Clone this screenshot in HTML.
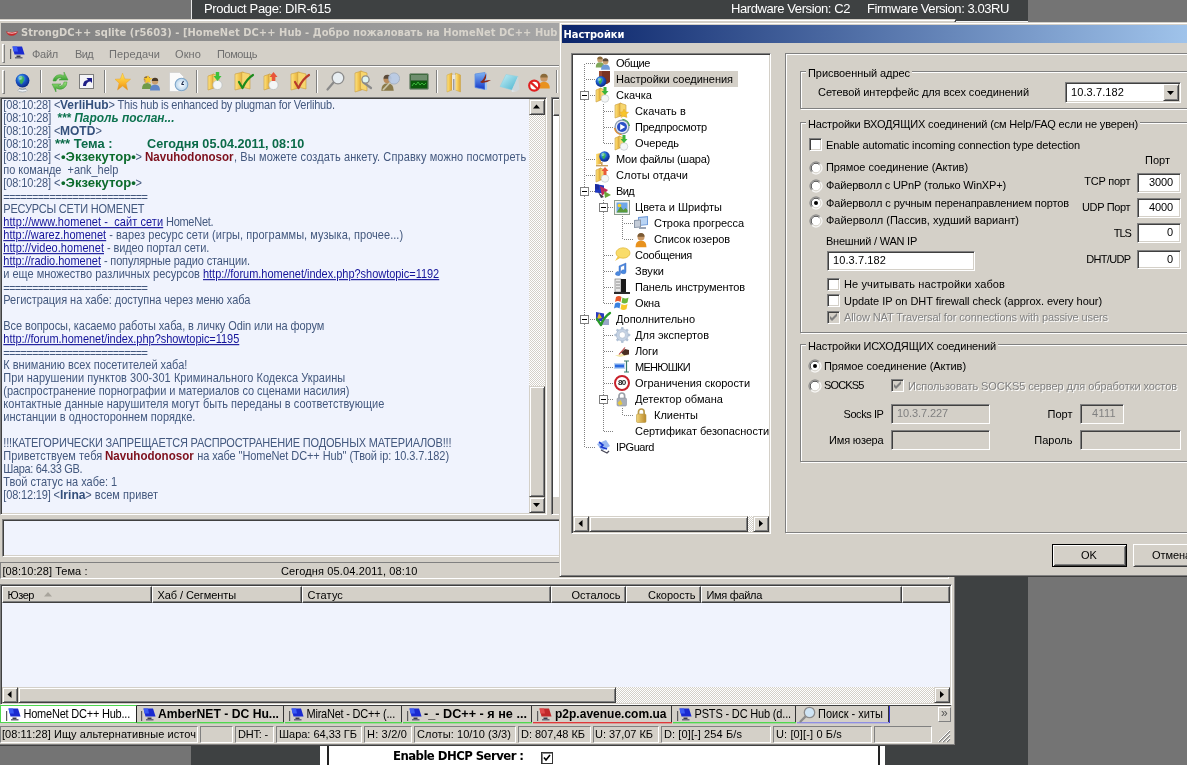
<!DOCTYPE html>
<html lang="ru"><head><meta charset="utf-8"><title>StrongDC++ sqlite (r5603)</title>
<style>
html,body{margin:0;padding:0}
body{width:1187px;height:765px;overflow:hidden;position:relative;background:#747474;font:11px/13px "Liberation Sans","DejaVu Sans",sans-serif;color:#000}
#screen{position:absolute;left:0;top:0;width:1187px;height:765px;overflow:hidden;will-change:transform}
.b{position:absolute;box-sizing:border-box}
.t{position:absolute;white-space:pre;font:11px/13px "Liberation Sans","DejaVu Sans",sans-serif}
.ic{position:absolute;overflow:visible}
.face{background:#d4d0c8}
.win{background:#d4d0c8;border:1px solid;border-color:#d4d0c8 #404040 #404040 #d4d0c8;box-shadow:inset 1px 1px 0 #fff,inset -1px -1px 0 #808080}
.btn{background:#d4d0c8;border:1px solid;border-color:#fff #404040 #404040 #fff;box-shadow:inset 1px 1px 0 #d4d0c8,inset -1px -1px 0 #808080}
.sb{background:#d4d0c8;border:1px solid;border-color:#d4d0c8 #404040 #404040 #d4d0c8;box-shadow:inset 1px 1px 0 #fff,inset -1px -1px 0 #808080}
.sunk{border:1px solid;border-color:#808080 #fff #fff #808080;box-shadow:inset 1px 1px 0 #404040,inset -1px -1px 0 #d4d0c8}
.sunk1{border:1px solid;border-color:#808080 #fff #fff #808080}
.rais1{border:1px solid;border-color:#fff #808080 #808080 #fff}
.etch{border:1px solid #808080;box-shadow:1px 1px 0 #fff,inset 1px 1px 0 #fff}
.chk{background:repeating-conic-gradient(#fff 0% 25%,#d4d0c8 0% 50%) 0 0/2px 2px}
.hdr{background:#d4d0c8;border:1px solid;border-color:#fff #404040 #404040 #fff;box-shadow:inset -1px -1px 0 #808080}
.ms{transform:scaleY(1.12);transform-origin:0 10.3px}
.chat{color:#43587e}
.chat.nk{color:#34507c;font-weight:bold}
.chat.g{color:#0c6b2c;font-weight:bold}
.chat.r{color:#7d0f1c;font-weight:bold}
.chat.gi{color:#0d7350;font-weight:bold;font-style:italic}
.chat.gt{color:#0b6b49;font-weight:bold}
.chat.u{color:#14149a;text-decoration:underline}
.bold{font-weight:bold}
.ttl{font:bold 11px/18px "DejaVu Sans Condensed","Liberation Sans",sans-serif}
.dis{color:#808080;text-shadow:1px 1px 0 #fff}
.menu{color:#6f6f6f}
.tr{line-height:16px}
.dot{position:absolute;background-image:linear-gradient(90deg,#808080 50%,transparent 50%);background-size:2px 1px}
.dotv{position:absolute;background-image:linear-gradient(180deg,#808080 50%,transparent 50%);background-size:1px 2px}
</style></head><body><div id="screen">
<svg width="0" height="0" style="position:absolute"><defs>
<radialGradient id="gGlobe" cx="40%" cy="35%" r="70%"><stop offset="0" stop-color="#5fd8f4"/><stop offset=".5" stop-color="#1a55c8"/><stop offset="1" stop-color="#0a237a"/></radialGradient>
<linearGradient id="gFold" x1="0" y1="0" x2="1" y2="0"><stop offset="0" stop-color="#fbe38a"/><stop offset=".5" stop-color="#f3c64f"/><stop offset="1" stop-color="#d9a441"/></linearGradient>
<linearGradient id="gStar" x1="0" y1="0" x2="0" y2="1"><stop offset="0" stop-color="#ffe95a"/><stop offset=".6" stop-color="#fbb52a"/><stop offset="1" stop-color="#e08a18"/></linearGradient>
<linearGradient id="gGreen" x1="0" y1="0" x2="0" y2="1"><stop offset="0" stop-color="#9be07a"/><stop offset="1" stop-color="#2f9a2a"/></linearGradient>
<linearGradient id="gNote" x1="0" y1="0" x2="1" y2="1"><stop offset="0" stop-color="#c8f0f6"/><stop offset="1" stop-color="#49b3cf"/></linearGradient>
<linearGradient id="gPic" x1="0" y1="0" x2="0" y2="1"><stop offset="0" stop-color="#7fb4f2"/><stop offset="1" stop-color="#1437c8"/></linearGradient>
<radialGradient id="gClock" cx="50%" cy="50%" r="60%"><stop offset="0" stop-color="#ffffff"/><stop offset="1" stop-color="#a8cbe8"/></radialGradient>
<linearGradient id="gLock" x1="0" y1="0" x2="1" y2="0"><stop offset="0" stop-color="#f3d67a"/><stop offset="1" stop-color="#b9882a"/></linearGradient>
<linearGradient id="gTitleA" x1="0" y1="0" x2="1" y2="0"><stop offset="0" stop-color="#0a246a"/><stop offset="1" stop-color="#a6caf0"/></linearGradient>
</defs></svg>
<div class="b " style="left:191px;top:0px;width:837px;height:765px;background:#3e4142"></div>
<div class="b " style="left:191px;top:0px;width:1px;height:21px;background:#e8e8e8"></div>
<div class="b " style="left:320px;top:745px;width:565px;height:20px;background:#fff"></div>
<div class="b " style="left:327px;top:745px;width:2px;height:20px;background:#222"></div>
<div class="b " style="left:878px;top:745px;width:2px;height:20px;background:#222"></div>
<div class="b " style="left:955px;top:21px;width:73px;height:1px;background:#f4f4f4"></div>
<div id="t1" class="t" style="left:204px;top:1px;letter-spacing:-0.353px;font-size:13px;line-height:16px;color:#fff">Product Page: DIR-615</div>
<div id="t2" class="t" style="left:731px;top:1px;letter-spacing:-0.409px;font-size:13px;line-height:16px;color:#fff">Hardware Version: C2</div>
<div id="t3" class="t" style="left:867px;top:1px;letter-spacing:-0.436px;font-size:13px;line-height:16px;color:#fff">Firmware Version: 3.03RU</div>
<div id="t4" class="t ttl" style="left:393px;top:748px;letter-spacing:-0.551px;font-size:13px;line-height:16px;color:#000">Enable DHCP Server :</div>
<div class="b " style="left:541px;top:752px;width:12px;height:12px;background:#fff;border:1px solid #333;box-shadow:inset 1px 1px 0 #888"></div>
<svg class="ic" style="left:543px;top:754px" width="8" height="8"><path d="M1 3.500 l2 2.500 l4 -5" fill="none" stroke="#000" stroke-width="1.600"/></svg>
<div class="b win" style="left:-3px;top:19px;width:959px;height:727px;"></div>
<div class="b " style="left:1px;top:23px;width:950px;height:18px;background:linear-gradient(90deg,#808080,#c0c0c0)"></div>
<svg class="ic" style="left:6px;top:31px" width="12" height="6"><path d="M0 .3 q3 1.300 5.500 1 q3.500 -.5 6.500 -.8 q-1.500 4 -6.500 4.300 q-4 0 -5.500 -4.500z" fill="#c8282a"/><path d="M1.500 1.600 q4.500 1.400 9 -.2" stroke="#f4d0d0" stroke-width=".9" fill="none"/></svg>
<div id="t5" class="t ttl" style="left:21px;top:24px;letter-spacing:0.058px;color:#d8d4cc">StrongDC++ sqlite (r5603) - [HomeNet DC++ Hub - Добро пожаловать на HomeNet DC++ Hub</div>
<div class="b rais1" style="left:2px;top:44px;width:3px;height:19px;"></div>
<svg class="ic" style="left:10px;top:46px" width="15" height="14" viewBox="0 0 15 14"><rect x="0" y="3" width="1.200" height="10" fill="#5a5a5a"/><path d="M2.500 .5 l9.500 0 l2.500 8 l-10 0z" fill="#1a2ad0"/><path d="M2.500 .5 l4.500 0 l1 5 l-4.500 0z" fill="#3a5af4"/><rect x="6.500" y="9.500" width="4" height="1.500" fill="#3a3a4a"/><rect x="5" y="11" width="7.500" height="1.500" fill="#6a6a7a"/></svg>
<div id="t6" class="t menu" style="left:32px;top:48px;letter-spacing:-0.262px;">Файл</div>
<div id="t7" class="t menu" style="left:75px;top:48px;letter-spacing:-0.635px;">Вид</div>
<div id="t8" class="t menu" style="left:109px;top:48px;letter-spacing:0.102px;">Передачи</div>
<div id="t9" class="t menu" style="left:175px;top:48px;letter-spacing:0.109px;">Окно</div>
<div id="t10" class="t menu" style="left:217px;top:48px;letter-spacing:-0.417px;">Помощь</div>
<div class="b " style="left:0px;top:65px;width:955px;height:1px;background:#808080"></div>
<div class="b " style="left:0px;top:66px;width:955px;height:1px;background:#fff"></div>
<div class="b rais1" style="left:2px;top:70px;width:3px;height:24px;"></div>
<div class="b " style="left:40px;top:70px;width:1px;height:23px;background:#808080"></div>
<div class="b " style="left:41px;top:70px;width:1px;height:23px;background:#fff"></div>
<div class="b " style="left:104px;top:70px;width:1px;height:23px;background:#808080"></div>
<div class="b " style="left:105px;top:70px;width:1px;height:23px;background:#fff"></div>
<div class="b " style="left:196px;top:70px;width:1px;height:23px;background:#808080"></div>
<div class="b " style="left:197px;top:70px;width:1px;height:23px;background:#fff"></div>
<div class="b " style="left:316px;top:70px;width:1px;height:23px;background:#808080"></div>
<div class="b " style="left:317px;top:70px;width:1px;height:23px;background:#fff"></div>
<div class="b " style="left:436px;top:70px;width:1px;height:23px;background:#808080"></div>
<div class="b " style="left:437px;top:70px;width:1px;height:23px;background:#fff"></div>
<div class="b " style="left:556px;top:70px;width:1px;height:23px;background:#808080"></div>
<div class="b " style="left:557px;top:70px;width:1px;height:23px;background:#fff"></div>
<svg class="ic" style="left:14px;top:71px" width="18" height="22" viewBox="0 0 18 22"><ellipse cx="8.500" cy="19.300" rx="4.600" ry="1.700" fill="#eef2f6" stroke="#9aa3ad" stroke-width=".7"/><path d="M5 17.500 q3.500 2 7 0" stroke="#8a93a0" stroke-width="1" fill="none"/><circle cx="8.5" cy="9.6" r="6.9" fill="url(#gGlobe)"/><path d="M4.705 7.185 q2.76 -4.14 5.52 0 q-0.69 4.83 -3.105 6.21 q-3.45 -4.14 0.345 -6.21 z" fill="#37b34a" opacity=".9"/><circle cx="6.43" cy="6.84" r="2.07" fill="#fff" opacity=".35"/></svg>
<svg class="ic" style="left:50px;top:71px" width="20" height="22" viewBox="0 0 20 22"><path d="M3 10 a7 7 0 0 1 11 -5 l0 -4 l4 8 l-9 0 l3 -2 a4.5 4.5 0 0 0 -6 3 z" fill="url(#gGreen)" stroke="#3c9a34" stroke-width=".5"/><path d="M17 11 a7 7 0 0 1 -11 6 l0 4 l-4 -8 l9 0 l-3 2 a4.5 4.5 0 0 0 6 -4 z" fill="url(#gGreen)" stroke="#3c9a34" stroke-width=".5"/></svg>
<svg class="ic" style="left:79px;top:74px" width="15" height="15" viewBox="0 0 15 15"><rect x=".5" y=".5" width="14" height="14" fill="#f4f4f8" stroke="#7d7d7d"/><path d="M4 12 q0 -6 5 -6 l-1.5 -2 l5.5 0 l0 5 l-1.5 -1.5 q-4 0 -4.5 4.5 z" fill="#1c1c86"/></svg>
<svg class="ic" style="left:115px;top:72px" width="16" height="20" viewBox="0 0 18 21"><path d="M8.500 0.500 L11 7 L17.500 7.400 L12.400 11.800 L14.200 19.500 L8.500 15 L2.800 19.500 L4.600 11.800 L0 7.400 L6 7 Z" fill="url(#gStar)" stroke="#e9a02a" stroke-width=".5"/></svg>
<svg class="ic" style="left:141px;top:73px" width="20" height="19" viewBox="0 0 20 19"><path d="M1 16 q0 -6 5 -6 q5 0 5 6 z" fill="#6f9a4a"/><circle cx="6" cy="6.8" r="3.2" fill="#c9a070"/><path d="M2.8 6.4 a3.2 3.2 0 0 1 6.4 0 z" fill="#8a6a3a"/><path d="M9 17.5 q0 -6 5 -6 q5 0 5 6 z" fill="#5f86c8"/><circle cx="14" cy="8.3" r="3.2" fill="#c9a070"/><path d="M10.8 7.9 a3.2 3.2 0 0 1 6.4 0 z" fill="#4a3a2a"/><path d="M7 2 l1.3 3 3.2 .2 -2.5 2 .9 3.2 -2.9 -1.8 -2.9 1.8 .9 -3.2 -2.5 -2 3.2 -.2z" fill="#f7c72a"/></svg>
<svg class="ic" style="left:169px;top:72px" width="20" height="21" viewBox="0 0 20 21"><path d="M.5 .5 h10 l4 4 v15 h-14 z" fill="#fbfbfb" stroke="#c9c9c9" stroke-width=".6"/><circle cx="12.5" cy="12.5" r="6.3" fill="url(#gClock)" stroke="#7fa6c9" stroke-width="1.1"/><path d="M12.5 12.5 l2 -3.5 M12.5 12.5 h2.5" stroke="#1c2c4c" stroke-width="1.1" fill="none"/></svg>
<svg class="ic" style="left:208px;top:72px" width="15" height="19" viewBox="0 0 15 19"><path d="M0 4 l6.05 -2 v14 l-6.05 2 z" fill="url(#gFold)" stroke="#c89a3a" stroke-width=".6"/><path d="M4.95 2 l6.05 2 v13 l-6.05 -2 z" fill="#f7d66e" stroke="#c89a3a" stroke-width=".6"/><circle cx="9.5" cy="13" r="4.6" fill="#f4f6f6" stroke="#b9bfc2" stroke-width=".7"/><path d="M7.8 0 h3.4 v4 h2.3 l-4 5 l-4 -5 h2.3 z" fill="#3cc03c"/></svg>
<svg class="ic" style="left:235px;top:72px" width="19" height="19" viewBox="0 0 19 19"><path d="M0 2 l8.25 -2 v16 l-8.25 2 z" fill="url(#gFold)" stroke="#c89a3a" stroke-width=".6"/><path d="M6.75 0 l8.25 2 v15 l-8.25 -2 z" fill="#f7d66e" stroke="#c89a3a" stroke-width=".6"/><path d="M4 10 l3.5 6 q4 -9 10.5 -13" fill="none" stroke="#1c8a1c" stroke-width="2.2" stroke-linecap="round" stroke-linejoin="round"/></svg>
<svg class="ic" style="left:264px;top:72px" width="15" height="19" viewBox="0 0 15 19"><path d="M0 4 l6.05 -2 v14 l-6.05 2 z" fill="url(#gFold)" stroke="#c89a3a" stroke-width=".6"/><path d="M4.95 2 l6.05 2 v13 l-6.05 -2 z" fill="#f7d66e" stroke="#c89a3a" stroke-width=".6"/><circle cx="9.5" cy="13" r="4.6" fill="#f4f6f6" stroke="#b9bfc2" stroke-width=".7"/><path d="M9.5 0 l4 5 h-2.3 v4 h-3.4 v-4 h-2.3 z" fill="#e8553a"/></svg>
<svg class="ic" style="left:291px;top:72px" width="19" height="19" viewBox="0 0 19 19"><path d="M0 2 l8.25 -2 v16 l-8.25 2 z" fill="url(#gFold)" stroke="#c89a3a" stroke-width=".6"/><path d="M6.75 0 l8.25 2 v15 l-8.25 -2 z" fill="#f7d66e" stroke="#c89a3a" stroke-width=".6"/><path d="M4 10 l3.5 6 q4 -9 10.5 -13" fill="none" stroke="#b83a2a" stroke-width="2.2" stroke-linecap="round" stroke-linejoin="round"/></svg>
<svg class="ic" style="left:326px;top:71px" width="19" height="20" viewBox="0 0 19 20"><line x1="7.94" y1="11.06" x2="1.5" y2="18.5" stroke="#8a8a8a" stroke-width="2.2" stroke-linecap="round"/><circle cx="12" cy="7" r="5.8" fill="#e8eef2" stroke="#8c8c8c" stroke-width="1.3"/></svg>
<svg class="ic" style="left:355px;top:71px" width="18" height="22" viewBox="0 0 18 22"><path d="M0 2 l6.6 -2 v19 l-6.6 2 z" fill="url(#gFold)" stroke="#c89a3a" stroke-width=".6"/><path d="M5.4 0 l6.6 2 v18 l-6.6 -2 z" fill="#f7d66e" stroke="#c89a3a" stroke-width=".6"/><line x1="7.98" y1="11.02" x2="16" y2="17" stroke="#8a8a8a" stroke-width="2.2" stroke-linecap="round"/><circle cx="10.5" cy="8.5" r="3.6" fill="#dff4f0" stroke="#8c8c8c" stroke-width="1.3"/></svg>
<svg class="ic" style="left:381px;top:72px" width="19" height="20" viewBox="0 0 19 20"><path d="M0.25 18.75 q0 -7.5 6.25 -7.5 q6.25 0 6.25 7.5 z" fill="#8a7a4a"/><circle cx="6.5" cy="7.25" r="4" fill="#b98a5a"/><path d="M2.5 6.75 a4 4 0 0 1 8 0 z" fill="#5a4a3a"/><circle cx="13" cy="6.5" r="5.6" fill="#b9cbe6" stroke="#9aa8ba" stroke-width=".8" opacity=".92"/><line x1="9" y1="10.5" x2="2" y2="18" stroke="#c9c4a8" stroke-width="1.8"/></svg>
<svg class="ic" style="left:409px;top:73px" width="20" height="17" viewBox="0 0 20 17"><rect x=".5" y=".5" width="19" height="16" rx="1.5" fill="#3f6a3f" stroke="#8a9a86"/><rect x="2" y="2" width="16" height="5" fill="#6f8f6f"/><rect x="2" y="8" width="16" height="7" fill="#0b5a0b"/><path d="M3 13 l2 -3 2 2 2 -3 2 3 2 -2 2 2 2 -2" stroke="#3fbf3f" stroke-width=".9" fill="none"/></svg>
<svg class="ic" style="left:447px;top:73px" width="14" height="19" viewBox="0 0 14 19"><path d="M0 2 l5 -2 v17 l-5 2z" fill="url(#gFold)" stroke="#c9a23f" stroke-width=".5"/><path d="M8.5 0 l5 2 v17 l-5 -2z" fill="url(#gFold)" stroke="#c9a23f" stroke-width=".5"/><rect x="5" y="2" width="3.5" height="15" fill="#e9e6de"/><rect x="6.3" y="6" width="1" height="11" fill="#7a7a86"/></svg>
<svg class="ic" style="left:474px;top:72px" width="18" height="19" viewBox="0 0 18 19"><path d="M1 2 l10 -1.5 v17 l-10 -2z" fill="url(#gPic)" stroke="#5f8fdf" stroke-width=".8"/><path d="M11 .5 l2 1 v16.5 l-2 -.5z" fill="#9fc4f4"/><path d="M6 10 q4 -2 6 -9 q1 5 -2 8 q4 -1 7 -1 q-4 3 -9 3z" fill="#8a2a1a"/></svg>
<svg class="ic" style="left:500px;top:74px" width="20" height="18" viewBox="0 0 20 18"><path d="M6 1 l12 2 l-1 14 l-5 1 z" fill="#dfe6ea"/><path d="M6 .5 l12 2 l-6 13.5 l-12 -3.5z" fill="url(#gNote)" stroke="#8fd0de" stroke-width=".5"/><path d="M12 16 l6 -13.5 l1.5 13 l-3 2z" fill="#cfd6da"/></svg>
<svg class="ic" style="left:528px;top:72px" width="22" height="20" viewBox="0 0 22 20"><path d="M10.25 16.55 q0 -6.9 5.75 -6.9 q5.75 0 5.75 6.9 z" fill="#e8921e"/><circle cx="16" cy="5.97" r="3.68" fill="#c99866"/><path d="M12.32 5.51 a3.68 3.68 0 0 1 7.36 0 z" fill="#8a6a3a"/><circle cx="6.2" cy="13.6" r="5" fill="#fff" stroke="#e02020" stroke-width="2.2"/><line x1="2.8" y1="10.4" x2="9.6" y2="16.8" stroke="#e02020" stroke-width="2.2"/></svg>
<div class="b sunk" style="left:0px;top:97px;width:547px;height:418px;background:#f0f3fd"></div>
<div class="b chk" style="left:529px;top:99px;width:16px;height:414px;"></div>
<div class="b sb" style="left:529px;top:99px;width:16px;height:16px;"></div>
<svg class="ic" style="left:533px;top:104px" width="8" height="5"><path d="M0 4.500 l3.500 -4 l3.500 4z" fill="#000"/></svg>
<div class="b sb" style="left:529px;top:386px;width:16px;height:111px;"></div>
<div class="b sb" style="left:529px;top:497px;width:16px;height:16px;"></div>
<svg class="ic" style="left:533px;top:503px" width="8" height="5"><path d="M0 0 l3.500 4 l3.500 -4z" fill="#000"/></svg>
<div id="c0_0" class="t ms chat" style="left:3.3px;top:99px;letter-spacing:-0.118px;">[08:10:28] &lt;</div>
<div id="c0_1" class="t ms chat nk sx" style="left:60.2px;top:99px;transform:scale(1.0891,1.12);">VerliHub</div>
<div id="c0_2" class="t ms chat" style="left:108.6px;top:99px;letter-spacing:-0.199px;">&gt; This hub is enhanced by plugman for Verlihub.</div>
<div id="c1_0" class="t ms chat" style="left:3.3px;top:112px;letter-spacing:-0.094px;">[08:10:28]</div>
<div id="c1_1" class="t ms chat gi sx" style="left:57px;top:112px;transform:scale(1.0865,1.12);">*** Пароль послан...</div>
<div id="c2_0" class="t ms chat" style="left:3.3px;top:125px;letter-spacing:-0.118px;">[08:10:28] &lt;</div>
<div id="c2_1" class="t ms chat nk sx" style="left:60.2px;top:125px;transform:scale(1.0929,1.12);">MOTD</div>
<div id="c2_2" class="t ms chat" style="left:95.6px;top:125px;letter-spacing:-0.837px;">&gt;</div>
<div id="c3_0" class="t ms chat" style="left:3.3px;top:138px;letter-spacing:-0.094px;">[08:10:28]</div>
<div id="c3_1" class="t ms chat gt sx" style="left:54.5px;top:138px;transform:scale(1.1765,1.12);">*** Тема :</div>
<div id="c3_2" class="t ms chat gt sx" style="left:147.3px;top:138px;transform:scale(1.1492,1.12);">Сегодня 05.04.2011, 08:10</div>
<div id="c4_0" class="t ms chat" style="left:3.3px;top:151px;letter-spacing:-0.118px;">[08:10:28] &lt;</div>
<div id="c4_1" class="t ms chat g sx" style="left:60.6px;top:151px;transform:scale(1.1888,1.12);">•Экзекутор•</div>
<div id="c4_2" class="t ms chat" style="left:135.4px;top:151px;letter-spacing:-0.438px;">&gt;</div>
<div id="c4_3" class="t ms chat r sx" style="left:145.4px;top:151px;transform:scale(1.0505,1.12);">Navuhodonosor</div>
<div id="c4_4" class="t ms chat" style="left:234px;top:151px;letter-spacing:0.110px;">, Вы можете создать анкету. Справку можно посмотреть</div>
<div id="c5_0" class="t ms chat" style="left:3.3px;top:164px;letter-spacing:-0.032px;">по команде  +ank_help</div>
<div id="c6_0" class="t ms chat" style="left:3.3px;top:177px;letter-spacing:-0.118px;">[08:10:28] &lt;</div>
<div id="c6_1" class="t ms chat g sx" style="left:60.6px;top:177px;transform:scale(1.1888,1.12);">•Экзекутор•</div>
<div id="c6_2" class="t ms chat" style="left:135.4px;top:177px;letter-spacing:-0.438px;">&gt;</div>
<div id="c7_0" class="t ms chat" style="left:3.3px;top:191px;letter-spacing:-0.664px;">=========================</div>
<div id="c8_0" class="t ms chat" style="left:3.3px;top:203px;letter-spacing:-0.208px;">РЕСУРСЫ СЕТИ HOMENET</div>
<div id="c9_0" class="t ms chat u" style="left:3.3px;top:216px;letter-spacing:0.070px;">http://www.homenet -  сайт сети</div>
<div id="c9_1" class="t ms chat" style="left:163.2px;top:216px;letter-spacing:-0.275px;"> HomeNet.</div>
<div id="c10_0" class="t ms chat u" style="left:3.3px;top:229px;letter-spacing:0.008px;">http://warez.homenet</div>
<div id="c10_1" class="t ms chat" style="left:106.2px;top:229px;letter-spacing:0.040px;"> - варез ресурс сети (игры, программы, музыка, прочее...)</div>
<div id="c11_0" class="t ms chat u" style="left:3.3px;top:242px;letter-spacing:0.051px;">http://video.homenet</div>
<div id="c11_1" class="t ms chat" style="left:104px;top:242px;letter-spacing:-0.101px;"> - видео портал сети.</div>
<div id="c12_0" class="t ms chat u" style="left:3.3px;top:255px;letter-spacing:-0.007px;">http://radio.homenet</div>
<div id="c12_1" class="t ms chat" style="left:101px;top:255px;letter-spacing:-0.148px;"> - популярные радио станции.</div>
<div id="c13_0" class="t ms chat" style="left:3.3px;top:268px;">и еще множество различных ресурсов </div>
<div id="c13_1" class="t ms chat u" style="left:203px;top:268px;letter-spacing:-0.026px;">http://forum.homenet/index.php?showtopic=1192</div>
<div id="c14_0" class="t ms chat" style="left:3.3px;top:282px;letter-spacing:-0.664px;">=========================</div>
<div id="c15_0" class="t ms chat" style="left:3.3px;top:294px;letter-spacing:-0.046px;">Регистрация на хабе: доступна через меню хаба</div>
<div id="c17_0" class="t ms chat" style="left:3.3px;top:320px;letter-spacing:-0.076px;">Все вопросы, касаемо работы хаба, в личку Odin или на форум</div>
<div id="c18_0" class="t ms chat u" style="left:3.3px;top:333px;letter-spacing:-0.031px;">http://forum.homenet/index.php?showtopic=1195</div>
<div id="c19_0" class="t ms chat" style="left:3.3px;top:347px;letter-spacing:-0.664px;">=========================</div>
<div id="c20_0" class="t ms chat" style="left:3.3px;top:359px;">К вниманию всех посетителей хаба!</div>
<div id="c21_0" class="t ms chat" style="left:3.3px;top:372px;letter-spacing:0.050px;">При нарушении пунктов 300-301 Криминального Кодекса Украины</div>
<div id="c22_0" class="t ms chat" style="left:3.3px;top:385px;letter-spacing:-0.035px;">(распространение порнографии и материалов со сценами насилия)</div>
<div id="c23_0" class="t ms chat" style="left:3.3px;top:398px;letter-spacing:0.016px;">контактные данные нарушителя могут быть переданы в соответствующие</div>
<div id="c24_0" class="t ms chat" style="left:3.3px;top:411px;">инстанции в одностороннем порядке.</div>
<div id="c26_0" class="t ms chat" style="left:3.3px;top:437px;letter-spacing:-0.173px;">!!!КАТЕГОРИЧЕСКИ ЗАПРЕЩАЕТСЯ РАСПРОСТРАНЕНИЕ ПОДОБНЫХ МАТЕРИАЛОВ!!!</div>
<div id="c27_0" class="t ms chat" style="left:3.3px;top:450px;letter-spacing:0.078px;">Приветствуем тебя </div>
<div id="c27_1" class="t ms chat r sx" style="left:105.4px;top:450px;transform:scale(1.0528,1.12);">Navuhodonosor</div>
<div id="c27_2" class="t ms chat" style="left:194.2px;top:450px;letter-spacing:-0.081px;"> на хабе "HomeNet DC++ Hub" (Твой ip: 10.3.7.182)</div>
<div id="c28_0" class="t ms chat" style="left:3.3px;top:463px;letter-spacing:-0.340px;">Шара: 64.33 GB.</div>
<div id="c29_0" class="t ms chat" style="left:3.3px;top:476px;">Твой статус на хабе: 1</div>
<div id="c30_0" class="t ms chat" style="left:3.3px;top:489px;letter-spacing:-0.160px;">[08:12:19] &lt;</div>
<div id="c30_1" class="t ms chat nk sx" style="left:59.7px;top:489px;transform:scale(1.1018,1.12);">Irina</div>
<div id="c30_2" class="t ms chat" style="left:85.3px;top:489px;letter-spacing:0.048px;">&gt; всем привет</div>
<div class="b sunk" style="left:551px;top:97px;width:60px;height:418px;background:#fff"></div>
<div class="b hdr" style="left:553px;top:99px;width:40px;height:17px;"></div>
<div class="b face" style="left:553px;top:497px;width:30px;height:16px;"></div>
<div class="b sunk" style="left:2px;top:519px;width:948px;height:38px;background:#f0f3fd"></div>
<div class="b sunk1" style="left:0px;top:562px;width:949px;height:17px;"></div>
<div id="t62" class="t" style="left:2.5px;top:565px;letter-spacing:0.059px;">[08:10:28] Тема :</div>
<div id="t63" class="t" style="left:281px;top:565px;letter-spacing:0.136px;">Сегодня 05.04.2011, 08:10</div>
<div class="b sunk" style="left:0px;top:584px;width:952px;height:121px;background:#f0f3fd"></div>
<div class="b hdr" style="left:2px;top:586px;width:150px;height:17px;"></div>
<div id="t64" class="t" style="left:7.5px;top:589px;letter-spacing:-0.445px;">Юзер</div>
<div class="b hdr" style="left:152px;top:586px;width:150px;height:17px;"></div>
<div id="t65" class="t" style="left:157.5px;top:589px;letter-spacing:-0.086px;">Хаб / Сегменты</div>
<div class="b hdr" style="left:302px;top:586px;width:249px;height:17px;"></div>
<div id="t66" class="t" style="left:307.5px;top:589px;letter-spacing:0.120px;">Статус</div>
<div class="b hdr" style="left:551px;top:586px;width:75px;height:17px;"></div>
<div id="t67" class="t" style="left:571.52px;top:589px;">Осталось</div>
<div class="b hdr" style="left:626px;top:586px;width:75px;height:17px;"></div>
<div id="t68" class="t" style="left:647.98px;top:589px;">Скорость</div>
<div class="b hdr" style="left:701px;top:586px;width:201px;height:17px;"></div>
<div id="t69" class="t" style="left:706.5px;top:589px;letter-spacing:-0.316px;">Имя файла</div>
<div class="b hdr" style="left:902px;top:586px;width:48px;height:17px;"></div>
<svg class="ic" style="left:44px;top:592px" width="9" height="5"><path d="M0 4.500 l4 -4.500 l4 4.500z" fill="#a8a49c"/></svg>
<div class="b chk" style="left:2px;top:687px;width:948px;height:16px;"></div>
<div class="b sb" style="left:2px;top:687px;width:16px;height:16px;"></div>
<svg class="ic" style="left:7px;top:691px" width="5" height="8"><path d="M4.500 0 l-4 3.500 l4 3.500z" fill="#000"/></svg>
<div class="b sb" style="left:18px;top:687px;width:598px;height:16px;"></div>
<div class="b sb" style="left:934px;top:687px;width:16px;height:16px;"></div>
<svg class="ic" style="left:940px;top:691px" width="5" height="8"><path d="M0 0 l4 3.500 l-4 3.500z" fill="#000"/></svg>
<div class="b " style="left:0px;top:705px;width:951px;height:1px;background:#404040"></div>
<div class="b " style="left:0px;top:705px;width:137px;height:18px;background:#fff;border:1px solid #4fd84f;border-right:1px solid #222"></div>
<svg class="ic" style="left:6px;top:708px" width="15" height="14" viewBox="0 0 15 14"><rect x="0" y="3" width="1.200" height="10" fill="#5a5a5a"/><path d="M2.500 .5 l9.500 0 l2.500 8 l-10 0z" fill="#1a2ad0"/><path d="M2.500 .5 l4.500 0 l1 5 l-4.500 0z" fill="#3a5af4"/><rect x="6.500" y="9.500" width="4" height="1.500" fill="#3a3a4a"/><rect x="5" y="11" width="7.500" height="1.500" fill="#6a6a7a"/></svg>
<div id="t70" class="t ms" style="left:23.5px;top:708px;letter-spacing:-0.219px;">HomeNet DC++ Hub...</div>
<div class="b " style="left:283px;top:706px;width:1px;height:17px;background:#333"></div>
<div class="b " style="left:137px;top:722px;width:147px;height:1px;background:#4fd84f"></div>
<div class="b " style="left:137px;top:723px;width:147px;height:1px;background:#4fd84f;opacity:.35"></div>
<svg class="ic" style="left:141px;top:708px" width="15" height="14" viewBox="0 0 15 14"><rect x="0" y="3" width="1.200" height="10" fill="#5a5a5a"/><path d="M2.500 .5 l9.500 0 l2.500 8 l-10 0z" fill="#1a2ad0"/><path d="M2.500 .5 l4.500 0 l1 5 l-4.500 0z" fill="#3a5af4"/><rect x="6.500" y="9.500" width="4" height="1.500" fill="#3a3a4a"/><rect x="5" y="11" width="7.500" height="1.500" fill="#6a6a7a"/></svg>
<div id="t71" class="t ms bold sx" style="left:158px;top:708px;transform:scale(1.1060,1.12);">AmberNET - DC Hu...</div>
<div class="b " style="left:401px;top:706px;width:1px;height:17px;background:#333"></div>
<div class="b " style="left:285px;top:722px;width:117px;height:1px;background:#4fd84f"></div>
<div class="b " style="left:285px;top:723px;width:117px;height:1px;background:#4fd84f;opacity:.35"></div>
<svg class="ic" style="left:289px;top:708px" width="15" height="14" viewBox="0 0 15 14"><rect x="0" y="3" width="1.200" height="10" fill="#5a5a5a"/><path d="M2.500 .5 l9.500 0 l2.500 8 l-10 0z" fill="#1a2ad0"/><path d="M2.500 .5 l4.500 0 l1 5 l-4.500 0z" fill="#3a5af4"/><rect x="6.500" y="9.500" width="4" height="1.500" fill="#3a3a4a"/><rect x="5" y="11" width="7.500" height="1.500" fill="#6a6a7a"/></svg>
<div id="t72" class="t ms" style="left:306.5px;top:708px;letter-spacing:-0.232px;">MiraNet - DC++ (...</div>
<div class="b " style="left:531px;top:706px;width:1px;height:17px;background:#333"></div>
<div class="b " style="left:403px;top:722px;width:129px;height:1px;background:#4fd84f"></div>
<div class="b " style="left:403px;top:723px;width:129px;height:1px;background:#4fd84f;opacity:.35"></div>
<svg class="ic" style="left:407px;top:708px" width="15" height="14" viewBox="0 0 15 14"><rect x="0" y="3" width="1.200" height="10" fill="#5a5a5a"/><path d="M2.500 .5 l9.500 0 l2.500 8 l-10 0z" fill="#1a2ad0"/><path d="M2.500 .5 l4.500 0 l1 5 l-4.500 0z" fill="#3a5af4"/><rect x="6.500" y="9.500" width="4" height="1.500" fill="#3a3a4a"/><rect x="5" y="11" width="7.500" height="1.500" fill="#6a6a7a"/></svg>
<div id="t73" class="t ms bold sx" style="left:423.5px;top:708px;transform:scale(1.1510,1.12);">-_- DC++ - я не ...</div>
<div class="b " style="left:671px;top:706px;width:1px;height:17px;background:#333"></div>
<div class="b " style="left:533px;top:722px;width:139px;height:1px;background:#e0383a"></div>
<div class="b " style="left:533px;top:723px;width:139px;height:1px;background:#e0383a;opacity:.35"></div>
<svg class="ic" style="left:537px;top:708px" width="15" height="14" viewBox="0 0 15 14"><rect x="0" y="3" width="1.200" height="10" fill="#5a5a5a"/><path d="M2.500 .5 l9.500 0 l2.500 8 l-10 0z" fill="#c0282a"/><path d="M2.500 .5 l4.500 0 l1 5 l-4.500 0z" fill="#e0484a"/><rect x="6.500" y="9.500" width="4" height="1.500" fill="#3a3a4a"/><rect x="5" y="11" width="7.500" height="1.500" fill="#6a6a7a"/></svg>
<div id="t74" class="t ms bold sx" style="left:555px;top:708px;transform:scale(1.0921,1.12);">p2p.avenue.com.ua</div>
<div class="b " style="left:795px;top:706px;width:1px;height:17px;background:#333"></div>
<div class="b " style="left:673px;top:722px;width:123px;height:1px;background:#4fd84f"></div>
<div class="b " style="left:673px;top:723px;width:123px;height:1px;background:#4fd84f;opacity:.35"></div>
<svg class="ic" style="left:677px;top:708px" width="15" height="14" viewBox="0 0 15 14"><rect x="0" y="3" width="1.200" height="10" fill="#5a5a5a"/><path d="M2.500 .5 l9.500 0 l2.500 8 l-10 0z" fill="#1a2ad0"/><path d="M2.500 .5 l4.500 0 l1 5 l-4.500 0z" fill="#3a5af4"/><rect x="6.500" y="9.500" width="4" height="1.500" fill="#3a3a4a"/><rect x="5" y="11" width="7.500" height="1.500" fill="#6a6a7a"/></svg>
<div id="t75" class="t ms" style="left:694.5px;top:708px;letter-spacing:-0.165px;">PSTS - DC Hub (d...</div>
<div class="b " style="left:888px;top:706px;width:1px;height:17px;background:#333"></div>
<div class="b " style="left:797px;top:722px;width:92px;height:1px;background:#8f8fe4"></div>
<div class="b " style="left:797px;top:723px;width:92px;height:1px;background:#8f8fe4;opacity:.35"></div>
<svg class="ic" style="left:799px;top:706px" width="17" height="17" viewBox="0 0 17 17"><line x1="6.86" y1="10.14" x2="1.5" y2="15.5" stroke="#8a8a8a" stroke-width="2.2" stroke-linecap="round"/><circle cx="10.5" cy="6.5" r="5.2" fill="#cfe4f4" stroke="#8c8c8c" stroke-width="1.3"/></svg>
<div id="t76" class="t ms" style="left:818px;top:708px;letter-spacing:0.012px;">Поиск - хиты</div>
<div class="b " style="left:889px;top:706px;width:1px;height:17px;background:#3a3ac8"></div>
<div class="b rais1" style="left:938px;top:707px;width:13px;height:15px;"></div>
<div id="t77" class="t" style="left:941px;top:707px;color:#555;font-size:12px">»</div>
<div class="b sunk1" style="left:0px;top:726px;width:198px;height:17px;"></div>
<div id="t78" class="t" style="left:2px;top:728px;letter-spacing:0.067px;">[08:11:28] Ищу альтернативные источ</div>
<div class="b sunk1" style="left:200px;top:726px;width:33px;height:17px;"></div>
<div class="b sunk1" style="left:235px;top:726px;width:39px;height:17px;"></div>
<div id="t79" class="t" style="left:238px;top:728px;letter-spacing:-0.195px;">DHT: -</div>
<div class="b sunk1" style="left:276px;top:726px;width:86px;height:17px;"></div>
<div id="t80" class="t" style="left:279px;top:728px;letter-spacing:-0.022px;">Шара: 64,33 ГБ</div>
<div class="b sunk1" style="left:364px;top:726px;width:48px;height:17px;"></div>
<div id="t81" class="t" style="left:367px;top:728px;letter-spacing:0.184px;">H: 3/2/0</div>
<div class="b sunk1" style="left:414px;top:726px;width:102px;height:17px;"></div>
<div id="t82" class="t" style="left:417px;top:728px;letter-spacing:0.076px;">Слоты: 10/10 (3/3)</div>
<div class="b sunk1" style="left:518px;top:726px;width:73px;height:17px;"></div>
<div id="t83" class="t" style="left:521px;top:728px;letter-spacing:-0.033px;">D: 807,48 КБ</div>
<div class="b sunk1" style="left:593px;top:726px;width:66px;height:17px;"></div>
<div id="t84" class="t" style="left:595px;top:728px;letter-spacing:-0.024px;">U: 37,07 КБ</div>
<div class="b sunk1" style="left:661px;top:726px;width:110px;height:17px;"></div>
<div id="t85" class="t" style="left:664px;top:728px;letter-spacing:0.099px;">D: [0][-] 254 Б/s</div>
<div class="b sunk1" style="left:773px;top:726px;width:99px;height:17px;"></div>
<div id="t86" class="t" style="left:776px;top:728px;letter-spacing:0.128px;">U: [0][-] 0 Б/s</div>
<div class="b sunk1" style="left:874px;top:726px;width:58px;height:17px;"></div>
<svg class="ic" style="left:938px;top:730px" width="13" height="13"><path d="M12 1 L1 12 M12 5 L5 12 M12 9 L9 12" stroke="#808080" stroke-width="1.200"/><path d="M12 0 L0 12 M12 4 L4 12 M12 8 L8 12" stroke="#fff" stroke-width="1"/></svg>
<div class="b win" style="left:559px;top:22px;width:660px;height:555px;"></div>
<svg class="ic" style="left:562px;top:25px" width="652" height="18"><rect width="652" height="18" fill="url(#gTitleA)"/></svg>
<div id="t87" class="t ttl" style="left:563.5px;top:26px;letter-spacing:-0.005px;color:#fff">Настройки</div>
<div class="b sunk" style="left:571px;top:53px;width:200px;height:481px;background:#fff"></div>
<div class="dotv" style="left:584px;top:64px;width:1px;height:384px"></div>
<div class="dotv" style="left:603px;top:104px;width:1px;height:40px"></div>
<div class="dotv" style="left:603px;top:200px;width:1px;height:104px"></div>
<div class="dotv" style="left:622px;top:216px;width:1px;height:24px"></div>
<div class="dotv" style="left:603px;top:328px;width:1px;height:104px"></div>
<div class="dotv" style="left:622px;top:408px;width:1px;height:8px"></div>
<div class="b " style="left:614px;top:71px;width:124px;height:16px;background:#d4d0c8"></div>
<div class="dot" style="left:586px;top:63px;width:9px;height:1px"></div>
<svg class="ic" style="left:595px;top:55px" width="16" height="16" viewBox="0 0 16 16"><path d="M0.75 12.45 q0 -5.1 4.25 -5.1 q4.25 0 4.25 5.1 z" fill="#7fa85a"/><circle cx="5" cy="4.63" r="2.72" fill="#c9a070"/><path d="M2.28 4.29 a2.72 2.72 0 0 1 5.44 0 z" fill="#8a6a3a"/><path d="M6 14.8 q0 -5.4 4.5 -5.4 q4.5 0 4.5 5.4 z" fill="#6f9ad8"/><circle cx="10.5" cy="6.52" r="2.88" fill="#c9a070"/><path d="M7.62 6.16 a2.88 2.88 0 0 1 5.76 0 z" fill="#5a4a3a"/></svg>
<div id="tr0" class="t tr" style="left:616px;top:55px;letter-spacing:-0.434px;">Общие</div>
<div class="dot" style="left:586px;top:79px;width:9px;height:1px"></div>
<svg class="ic" style="left:595px;top:71px" width="16" height="16" viewBox="0 0 16 16"><path d="M4 0 h11 v11 l-3 2 h-8z" fill="#7a3422"/><path d="M4 0 h3 v12 h-3z" fill="#9a4a32"/><circle cx="6" cy="10.5" r="5.4" fill="url(#gGlobe)"/><path d="M3.03 8.61 q2.16 -3.24 4.32 0 q-0.54 3.78 -2.43 4.86 q-2.7 -3.24 0.27 -4.86 z" fill="#37b34a" opacity=".9"/><circle cx="4.38" cy="8.34" r="1.62" fill="#fff" opacity=".35"/></svg>
<div id="tr1" class="t tr" style="left:616px;top:71px;letter-spacing:-0.027px;">Настройки соединения</div>
<div class="dot" style="left:586px;top:95px;width:9px;height:1px"></div>
<div class="b " style="left:580px;top:91px;width:9px;height:9px;background:#fff;border:1px solid #808080"></div>
<div class="b " style="left:582px;top:95px;width:5px;height:1px;background:#000"></div>
<svg class="ic" style="left:595px;top:87px" width="16" height="16" viewBox="0 0 16 16"><path d="M1 3 l4.95 -2 v12 l-4.95 2 z" fill="url(#gFold)" stroke="#c89a3a" stroke-width=".6"/><path d="M5.05 1 l4.95 2 v11 l-4.95 -2 z" fill="#f7d66e" stroke="#c89a3a" stroke-width=".6"/><circle cx="10" cy="11.5" r="3.8" fill="#f4f6f6" stroke="#b9bfc2" stroke-width=".6"/><path d="M8.5 0 h3 v4 h2 l-3.5 4 l-3.5 -4 h2z" fill="#3cb43c"/></svg>
<div id="tr2" class="t tr" style="left:616px;top:87px;letter-spacing:0.036px;">Скачка</div>
<div class="dot" style="left:604px;top:111px;width:10px;height:1px"></div>
<svg class="ic" style="left:614px;top:103px" width="16" height="16" viewBox="0 0 16 16"><path d="M1 2 l6.05 -2 v13 l-6.05 2 z" fill="url(#gFold)" stroke="#c89a3a" stroke-width=".6"/><path d="M5.95 0 l6.05 2 v12 l-6.05 -2 z" fill="#f7d66e" stroke="#c89a3a" stroke-width=".6"/><path d="M10 6 l1.4 3 3.2 .3 -2.4 2.1 .8 3.2 -3 -1.7 -3 1.7 .8 -3.2 -2.4 -2.1 3.2 -.3z" fill="#f9c62a" stroke="#e0a020" stroke-width=".4"/></svg>
<div id="tr3" class="t tr" style="left:635px;top:103px;letter-spacing:0.094px;">Скачать в</div>
<div class="dot" style="left:604px;top:127px;width:10px;height:1px"></div>
<svg class="ic" style="left:614px;top:119px" width="16" height="16" viewBox="0 0 16 16"><circle cx="8" cy="8" r="7.6" fill="#8a9ab0"/><circle cx="8" cy="8" r="6.2" fill="#e8ecf2"/><circle cx="8" cy="8" r="5" fill="#2a50c8"/><path d="M6.2 5 l5 3 l-5 3z" fill="#fff"/><path d="M.6 9 a7.5 7.5 0 0 0 7 6.6" stroke="#e08a2a" stroke-width="1.4" fill="none"/><path d="M15.4 7 a7.5 7.5 0 0 0 -7 -6.6" stroke="#4aa84a" stroke-width="1.4" fill="none"/></svg>
<div id="tr4" class="t tr" style="left:635px;top:119px;letter-spacing:-0.217px;">Предпросмотр</div>
<div class="dot" style="left:604px;top:143px;width:10px;height:1px"></div>
<svg class="ic" style="left:614px;top:135px" width="16" height="16" viewBox="0 0 16 16"><path d="M1 3 l4.95 -2 v12 l-4.95 2 z" fill="url(#gFold)" stroke="#c89a3a" stroke-width=".6"/><path d="M5.05 1 l4.95 2 v11 l-4.95 -2 z" fill="#f7d66e" stroke="#c89a3a" stroke-width=".6"/><circle cx="10" cy="11.5" r="3.8" fill="#f4f6f6" stroke="#b9bfc2" stroke-width=".6"/><path d="M8.5 0 h3 v4 h2 l-3.5 4 l-3.5 -4 h2z" fill="#3cb43c"/></svg>
<div id="tr5" class="t tr" style="left:635px;top:135px;letter-spacing:-0.080px;">Очередь</div>
<div class="dot" style="left:586px;top:159px;width:9px;height:1px"></div>
<svg class="ic" style="left:595px;top:151px" width="16" height="16" viewBox="0 0 16 16"><path d="M1 3 l5 -1 v11 l-5 1z" fill="url(#gFold)"/><rect x="1" y="14" width="12" height="1.4" fill="#c9a060"/><rect x="6" y="11" width="1.6" height="3.5" fill="#c9a060"/><circle cx="9.5" cy="5.5" r="5.2" fill="url(#gGlobe)"/><path d="M6.64 3.68 q2.08 -3.12 4.16 0 q-0.52 3.64 -2.34 4.68 q-2.6 -3.12 0.26 -4.68 z" fill="#37b34a" opacity=".9"/><circle cx="7.94" cy="3.42" r="1.56" fill="#fff" opacity=".35"/></svg>
<div id="tr6" class="t tr" style="left:616px;top:151px;letter-spacing:-0.238px;">Мои файлы (шара)</div>
<div class="dot" style="left:586px;top:175px;width:9px;height:1px"></div>
<svg class="ic" style="left:595px;top:167px" width="16" height="16" viewBox="0 0 16 16"><path d="M1 3 l4.95 -2 v12 l-4.95 2 z" fill="url(#gFold)" stroke="#c89a3a" stroke-width=".6"/><path d="M5.05 1 l4.95 2 v11 l-4.95 -2 z" fill="#f7d66e" stroke="#c89a3a" stroke-width=".6"/><circle cx="10" cy="11.5" r="3.8" fill="#f4f6f6" stroke="#b9bfc2" stroke-width=".6"/><path d="M10 0 l3.5 4 h-2 v4 h-3 v-4 h-2z" fill="#e85a3a"/></svg>
<div id="tr7" class="t tr" style="left:616px;top:167px;letter-spacing:0.076px;">Слоты отдачи</div>
<div class="dot" style="left:586px;top:191px;width:9px;height:1px"></div>
<div class="b " style="left:580px;top:187px;width:9px;height:9px;background:#fff;border:1px solid #808080"></div>
<div class="b " style="left:582px;top:191px;width:5px;height:1px;background:#000"></div>
<svg class="ic" style="left:595px;top:183px" width="16" height="16" viewBox="0 0 16 16"><path d="M0 1 l9 1.5 v8 l-9 -1z" fill="#2038c0"/><path d="M5 3 l8 4 l-6 6z" fill="#c02a5a"/><path d="M9 8 l7 4 l-6 3z" fill="#6aa83a"/><path d="M3 9 l6 5 l-3 1z" fill="#3a3a4a"/><path d="M0 1 l4 .7 v5 l-4 -.5z" fill="#1a2aa0"/></svg>
<div id="tr8" class="t tr" style="left:616px;top:183px;letter-spacing:-0.635px;">Вид</div>
<div class="dot" style="left:604px;top:207px;width:10px;height:1px"></div>
<div class="b " style="left:599px;top:203px;width:9px;height:9px;background:#fff;border:1px solid #808080"></div>
<div class="b " style="left:601px;top:207px;width:5px;height:1px;background:#000"></div>
<svg class="ic" style="left:614px;top:199px" width="16" height="16" viewBox="0 0 16 16"><rect x=".5" y="1.500" width="15" height="14" fill="#f4f4f0" stroke="#8a9a8a"/><rect x="2.500" y="3.500" width="11" height="10" fill="#6fa8e8"/><path d="M2.500 13.500 l4 -6 l3 3.500 l2 -2 l2 2 v2.500z" fill="#5a9a3a"/><circle cx="5.500" cy="6.500" r="1.800" fill="#f7d02a"/></svg>
<div id="tr9" class="t tr" style="left:635px;top:199px;">Цвета и Шрифты</div>
<div class="dot" style="left:624px;top:223px;width:9px;height:1px"></div>
<svg class="ic" style="left:633px;top:215px" width="16" height="16" viewBox="0 0 16 16"><path d="M5 2 l10 -1 v9 l-10 1z" fill="#6f9ad8"/><path d="M6 3 l8 -.8 v7 l-8 .8z" fill="#b9d4f4"/><path d="M1 5 l7 -.5 v8 l-7 .5z" fill="#8a96a8"/><path d="M2 6 l5 -.4 v6 l-5 .4z" fill="#c4ccd8"/><rect x="6" y="12" width="7" height="2" fill="#9aa4b4"/></svg>
<div id="tr10" class="t tr" style="left:654px;top:215px;letter-spacing:-0.063px;">Строка прогресса</div>
<div class="dot" style="left:624px;top:239px;width:9px;height:1px"></div>
<svg class="ic" style="left:633px;top:231px" width="16" height="16" viewBox="0 0 16 16"><path d="M2.5 16.2 q0 -6.6 5.5 -6.6 q5.5 0 5.5 6.6 z" fill="#e8921e"/><circle cx="8" cy="6.08" r="3.52" fill="#c99866"/><path d="M4.48 5.64 a3.52 3.52 0 0 1 7.04 0 z" fill="#7a5a34"/></svg>
<div id="tr11" class="t tr" style="left:654px;top:231px;letter-spacing:-0.079px;">Список юзеров</div>
<div class="dot" style="left:604px;top:255px;width:10px;height:1px"></div>
<svg class="ic" style="left:614px;top:247px" width="16" height="16" viewBox="0 0 16 16"><ellipse cx="9" cy="6" rx="7" ry="5.2" fill="#f9dc6a" stroke="#e0b43a" stroke-width=".7"/><path d="M4 9 l-3 5 l6 -3.500z" fill="#f2c84a"/></svg>
<div id="tr12" class="t tr" style="left:635px;top:247px;letter-spacing:-0.300px;">Сообщения</div>
<div class="dot" style="left:604px;top:271px;width:10px;height:1px"></div>
<svg class="ic" style="left:614px;top:263px" width="16" height="16" viewBox="0 0 16 16"><path d="M5 3 l7 -3 v9 a2.5 2 0 1 1 -1.5 -2 v-5 l-4 1.800 v7 a2.500 2 0 1 1 -1.500 -2z" fill="#4a8ae0" stroke="#2a5ab8" stroke-width=".4"/></svg>
<div id="tr13" class="t tr" style="left:635px;top:263px;letter-spacing:0.059px;">Звуки</div>
<div class="dot" style="left:604px;top:287px;width:10px;height:1px"></div>
<svg class="ic" style="left:614px;top:279px" width="16" height="16" viewBox="0 0 16 16"><rect x="1" y="0" width="6" height="13" fill="#e8e8e8" stroke="#6a6a6a" stroke-width=".6"/><path d="M2 3 h4 M2 6 h4 M2 9 h4" stroke="#8a8a8a" stroke-width="1"/><rect x="7" y="0" width="5" height="13" fill="#1a1a1a"/><rect x="0" y="13" width="16" height="2" fill="#2a2a2a"/></svg>
<div id="tr14" class="t tr" style="left:635px;top:279px;letter-spacing:-0.096px;">Панель инструментов</div>
<div class="dot" style="left:604px;top:303px;width:10px;height:1px"></div>
<svg class="ic" style="left:614px;top:295px" width="16" height="16" viewBox="0 0 16 16"><path d="M2 2 q3 -2 5.500 0 l-1 5 q-2.500 -2 -5.500 0z" fill="#e8582a"/><path d="M8.500 2.500 q3 2 6 0 l-1 5 q-3 2 -6 0z" fill="#6ab83a"/><path d="M1 8.500 q3 -2 5.500 0 l-1 5 q-2.500 -2 -5.500 0z" fill="#3a82e0"/><path d="M7.500 9 q3 2 6 0 l-1 5 q-3 2 -6 0z" fill="#f7c82a"/></svg>
<div id="tr15" class="t tr" style="left:635px;top:295px;letter-spacing:-0.141px;">Окна</div>
<div class="dot" style="left:586px;top:319px;width:9px;height:1px"></div>
<div class="b " style="left:580px;top:315px;width:9px;height:9px;background:#fff;border:1px solid #808080"></div>
<div class="b " style="left:582px;top:319px;width:5px;height:1px;background:#000"></div>
<svg class="ic" style="left:595px;top:311px" width="16" height="16" viewBox="0 0 16 16"><path d="M1 1 l8 1.500 v8 l-8 -1z" fill="#2a3ac0"/><path d="M4 2 l3 5 l-5 1z" fill="#e8b82a"/><rect x="7" y="8" width="7" height="6" fill="#9aa6c8"/><path d="M2 8 l4 6 q3 -8 9 -12" fill="none" stroke="#2a9a2a" stroke-width="2.300" stroke-linecap="round" stroke-linejoin="round"/></svg>
<div id="tr16" class="t tr" style="left:616px;top:311px;letter-spacing:-0.013px;">Дополнительно</div>
<div class="dot" style="left:604px;top:335px;width:10px;height:1px"></div>
<svg class="ic" style="left:614px;top:327px" width="16" height="16" viewBox="0 0 16 16"><rect x="7" y="0" width="2.600" height="16" rx=".8" fill="#b4c4d8" transform="rotate(0 8.300 8)"/><rect x="7" y="0" width="2.600" height="16" rx=".8" fill="#b4c4d8" transform="rotate(45 8.300 8)"/><rect x="7" y="0" width="2.600" height="16" rx=".8" fill="#b4c4d8" transform="rotate(90 8.300 8)"/><rect x="7" y="0" width="2.600" height="16" rx=".8" fill="#b4c4d8" transform="rotate(135 8.300 8)"/><circle cx="8.300" cy="8" r="6" fill="#c4d2e4" stroke="#a4b4c8" stroke-width=".6"/><circle cx="8.300" cy="8" r="3.200" fill="#fff" stroke="#a4b4c8" stroke-width=".6"/></svg>
<div id="tr17" class="t tr" style="left:635px;top:327px;letter-spacing:0.018px;">Для экспертов</div>
<div class="dot" style="left:604px;top:351px;width:10px;height:1px"></div>
<svg class="ic" style="left:614px;top:343px" width="16" height="16" viewBox="0 0 16 16"><path d="M1 12.500 l9 -2 l4 1.500 l-8 2z" fill="#f4e8a8"/><path d="M7 9.500 l4 -3.500 l4 1 v4.500 l-5 .8z" fill="#4a2e22"/><path d="M5 11.500 l6 -7" stroke="#b83a3a" stroke-width="1.100"/></svg>
<div id="tr18" class="t tr" style="left:635px;top:343px;letter-spacing:-0.125px;">Логи</div>
<div class="dot" style="left:604px;top:367px;width:10px;height:1px"></div>
<svg class="ic" style="left:614px;top:359px" width="16" height="16" viewBox="0 0 16 16"><rect x="0" y="4" width="11" height="6" fill="#b9d4f4"/><rect x="1" y="5.500" width="9" height="3" fill="#2a6ae0"/><path d="M10 2 h5 M10 13 h5 M12.500 2 v11" stroke="#3a7a6a" stroke-width="1.200" fill="none"/></svg>
<div id="tr19" class="t tr" style="left:635px;top:359px;letter-spacing:-0.708px;">МЕНЮШКИ</div>
<div class="dot" style="left:604px;top:383px;width:10px;height:1px"></div>
<div class="ic" style="left:614px;top:375px;width:12px;height:12px;border:2px solid #c8202a;border-radius:50%;background:#fff;box-sizing:content-box;font:bold 8px/12px 'Liberation Sans',sans-serif;text-align:center;color:#222;letter-spacing:-.6px;text-indent:-.5px">80</div>
<div id="tr20" class="t tr" style="left:635px;top:375px;letter-spacing:-0.029px;">Ограничения скорости</div>
<div class="dot" style="left:604px;top:399px;width:10px;height:1px"></div>
<div class="b " style="left:599px;top:395px;width:9px;height:9px;background:#fff;border:1px solid #808080"></div>
<div class="b " style="left:601px;top:399px;width:5px;height:1px;background:#000"></div>
<svg class="ic" style="left:614px;top:391px" width="16" height="16" viewBox="0 0 16 16"><path d="M5 8 v-3.200 a2.800 2.800 0 0 1 5.600 0 v3.200" fill="none" stroke="#9aa0a8" stroke-width="1.700"/><rect x="3" y="7" width="9.500" height="8" rx="1.200" fill="#a8aeb8" stroke="#8a909a" stroke-width=".6"/><path d="M3.500 12 l3 -3 l2 4 l-3 1.500z" fill="#e8c83a"/></svg>
<div id="tr21" class="t tr" style="left:635px;top:391px;letter-spacing:0.037px;">Детектор обмана</div>
<div class="dot" style="left:624px;top:415px;width:9px;height:1px"></div>
<svg class="ic" style="left:633px;top:407px" width="16" height="16" viewBox="0 0 16 16"><path d="M5.500 8 v-3.200 a2.800 2.800 0 0 1 5.600 0 v3.200" fill="none" stroke="#b99a4a" stroke-width="1.700"/><rect x="3.500" y="7" width="9.500" height="8.500" rx="1.200" fill="url(#gLock)" stroke="#b99a4a" stroke-width=".6"/></svg>
<div id="tr22" class="t tr" style="left:654px;top:407px;letter-spacing:-0.016px;">Клиенты</div>
<div class="dot" style="left:604px;top:431px;width:10px;height:1px"></div>
<div id="tr23" class="t tr" style="left:635px;top:423px;letter-spacing:-0.039px;">Сертификат безопасности</div>
<div class="dot" style="left:586px;top:447px;width:9px;height:1px"></div>
<svg class="ic" style="left:595px;top:439px" width="16" height="16" viewBox="0 0 16 16"><path d="M2 5 l9 -4 l4 6 l-8 5z" fill="#9ab8f0"/><path d="M4 3 l4 3 l-2 2 l6 2" stroke="#1a3ad0" stroke-width="1.600" fill="none"/><path d="M6 11 l6 3 l2 -2" stroke="#4a4a5a" stroke-width="1.300" fill="none"/></svg>
<div id="tr24" class="t tr" style="left:616px;top:439px;letter-spacing:-0.424px;">IPGuard</div>
<div class="b chk" style="left:573px;top:516px;width:196px;height:16px;"></div>
<div class="b sb" style="left:573px;top:516px;width:16px;height:16px;"></div>
<svg class="ic" style="left:578px;top:520px" width="5" height="8"><path d="M4.500 0 l-4 3.500 l4 3.500z" fill="#000"/></svg>
<div class="b sb" style="left:589px;top:516px;width:159px;height:16px;"></div>
<div class="b sb" style="left:753px;top:516px;width:16px;height:16px;"></div>
<svg class="ic" style="left:759px;top:520px" width="5" height="8"><path d="M0 0 l4 3.500 l-4 3.500z" fill="#000"/></svg>
<div class="b etch" style="left:785px;top:53px;width:500px;height:480px;"></div>
<div class="b etch" style="left:800px;top:71px;width:500px;height:38px;"></div>
<div class="b face" style="left:806px;top:67px;width:106px;height:13px"></div>
<div id="t113" class="t" style="left:808px;top:67px;letter-spacing:-0.068px;">Присвоенный адрес</div>
<div id="t114" class="t" style="left:818px;top:86px;letter-spacing:-0.061px;">Сетевой интерфейс для всех соединений</div>
<div class="b sunk" style="left:1065px;top:82px;width:116px;height:21px;background:#fff"></div>
<div id="t115" class="t" style="left:1071px;top:86px;letter-spacing:0.100px;">10.3.7.182</div>
<div class="b btn" style="left:1163px;top:84px;width:16px;height:17px;"></div>
<svg class="ic" style="left:1167px;top:91px" width="8" height="5"><path d="M0 0 l3.500 4 l3.500 -4z" fill="#000"/></svg>
<div class="b etch" style="left:800px;top:122px;width:500px;height:211px;"></div>
<div class="b face" style="left:806px;top:118px;width:334px;height:13px"></div>
<div id="t116" class="t" style="left:808px;top:118px;letter-spacing:-0.159px;">Настройки ВХОДЯЩИХ соединений (см Help/FAQ если не уверен)</div>
<div class="b sunk" style="left:809px;top:138px;width:13px;height:13px;background:#fff"></div>
<div id="t117" class="t" style="left:826px;top:139px;letter-spacing:-0.116px;">Enable automatic incoming connection type detection</div>
<svg class="ic" style="left:810px;top:162px" width="12" height="12"><circle cx="6" cy="6" r="5.500" fill="#fff"/><path d="M1.700 10.300 A6 6 0 0 1 10.300 1.700" fill="none" stroke="#808080" stroke-width="1"/><path d="M2.600 9.400 A4.800 4.800 0 0 1 9.400 2.600" fill="none" stroke="#404040" stroke-width="1"/><path d="M10.300 1.700 A6 6 0 0 1 1.700 10.300" fill="none" stroke="#fff" stroke-width="1"/><path d="M9.400 2.600 A4.800 4.800 0 0 1 2.600 9.400" fill="none" stroke="#d4d0c8" stroke-width="1"/></svg>
<div id="t118" class="t" style="left:826px;top:161px;letter-spacing:-0.044px;">Прямое соединение (Актив)</div>
<svg class="ic" style="left:810px;top:180px" width="12" height="12"><circle cx="6" cy="6" r="5.500" fill="#fff"/><path d="M1.700 10.300 A6 6 0 0 1 10.300 1.700" fill="none" stroke="#808080" stroke-width="1"/><path d="M2.600 9.400 A4.800 4.800 0 0 1 9.400 2.600" fill="none" stroke="#404040" stroke-width="1"/><path d="M10.300 1.700 A6 6 0 0 1 1.700 10.300" fill="none" stroke="#fff" stroke-width="1"/><path d="M9.400 2.600 A4.800 4.800 0 0 1 2.600 9.400" fill="none" stroke="#d4d0c8" stroke-width="1"/></svg>
<div id="t119" class="t" style="left:826px;top:179px;letter-spacing:-0.154px;">Файерволл с UPnP (только WinXP+)</div>
<svg class="ic" style="left:810px;top:197px" width="12" height="12"><circle cx="6" cy="6" r="5.500" fill="#fff"/><path d="M1.700 10.300 A6 6 0 0 1 10.300 1.700" fill="none" stroke="#808080" stroke-width="1"/><path d="M2.600 9.400 A4.800 4.800 0 0 1 9.400 2.600" fill="none" stroke="#404040" stroke-width="1"/><path d="M10.300 1.700 A6 6 0 0 1 1.700 10.300" fill="none" stroke="#fff" stroke-width="1"/><path d="M9.400 2.600 A4.800 4.800 0 0 1 2.600 9.400" fill="none" stroke="#d4d0c8" stroke-width="1"/><circle cx="6" cy="6" r="2" fill="#000"/></svg>
<div id="t120" class="t" style="left:826px;top:197px;letter-spacing:-0.103px;">Файерволл с ручным перенаправлением портов</div>
<svg class="ic" style="left:810px;top:215px" width="12" height="12"><circle cx="6" cy="6" r="5.500" fill="#fff"/><path d="M1.700 10.300 A6 6 0 0 1 10.300 1.700" fill="none" stroke="#808080" stroke-width="1"/><path d="M2.600 9.400 A4.800 4.800 0 0 1 9.400 2.600" fill="none" stroke="#404040" stroke-width="1"/><path d="M10.300 1.700 A6 6 0 0 1 1.700 10.300" fill="none" stroke="#fff" stroke-width="1"/><path d="M9.400 2.600 A4.800 4.800 0 0 1 2.600 9.400" fill="none" stroke="#d4d0c8" stroke-width="1"/></svg>
<div id="t121" class="t" style="left:826px;top:214px;letter-spacing:-0.011px;">Файерволл (Пассив, худший вариант)</div>
<div id="t122" class="t" style="left:826px;top:235px;letter-spacing:-0.225px;">Внешний / WAN IP</div>
<div id="t123" class="t" style="left:1145px;top:154px;letter-spacing:0.012px;">Порт</div>
<div id="t124" class="t" style="left:1084.3px;top:175px;letter-spacing:-0.232px;">TCP порт</div>
<div class="b sunk" style="left:1137px;top:173px;width:44px;height:20px;background:#fff"></div>
<div id="t125" class="t" style="left:1149px;top:176px;letter-spacing:-0.121px;">3000</div>
<div id="t126" class="t" style="left:1082px;top:201px;letter-spacing:-0.341px;">UDP Порт</div>
<div class="b sunk" style="left:1137px;top:198px;width:44px;height:20px;background:#fff"></div>
<div id="t127" class="t" style="left:1149px;top:201px;letter-spacing:-0.121px;">4000</div>
<div id="t128" class="t" style="left:1113.8px;top:227px;letter-spacing:-1.062px;">TLS</div>
<div class="b sunk" style="left:1137px;top:223px;width:44px;height:20px;background:#fff"></div>
<div id="t129" class="t" style="left:1167px;top:226px;letter-spacing:-0.125px;">0</div>
<div id="t130" class="t" style="left:1086.3px;top:253px;letter-spacing:-0.699px;">DHT/UDP</div>
<div class="b sunk" style="left:1137px;top:250px;width:44px;height:19px;background:#fff"></div>
<div id="t131" class="t" style="left:1167px;top:253px;letter-spacing:-0.125px;">0</div>
<div class="b sunk" style="left:827px;top:251px;width:148px;height:20px;background:#fff"></div>
<div id="t132" class="t" style="left:833px;top:254px;letter-spacing:0.100px;">10.3.7.182</div>
<div class="b sunk" style="left:827px;top:278px;width:13px;height:13px;background:#fff"></div>
<div id="t133" class="t" style="left:844px;top:278px;letter-spacing:0.116px;">Не учитывать настройки хабов</div>
<div class="b sunk" style="left:827px;top:294px;width:13px;height:13px;background:#fff"></div>
<div id="t134" class="t" style="left:844px;top:295px;letter-spacing:-0.051px;">Update IP on DHT firewall check (approx. every hour)</div>
<div class="b sunk" style="left:827px;top:311px;width:13px;height:13px;background:#d4d0c8"></div>
<svg class="ic" style="left:830px;top:314px" width="7" height="7"><path d="M0 2 v3 l2 2 l5 -5 v-3 l-5 5z" fill="#808080"/></svg>
<div id="t135" class="t dis" style="left:844px;top:311px;letter-spacing:-0.096px;">Allow NAT Traversal for connections with passive users</div>
<div class="b etch" style="left:800px;top:344px;width:500px;height:118px;"></div>
<div class="b face" style="left:806px;top:340px;width:192px;height:13px"></div>
<div id="t136" class="t" style="left:808px;top:340px;letter-spacing:-0.142px;">Настройки ИСХОДЯЩИХ соединений</div>
<svg class="ic" style="left:809px;top:360px" width="12" height="12"><circle cx="6" cy="6" r="5.500" fill="#fff"/><path d="M1.700 10.300 A6 6 0 0 1 10.300 1.700" fill="none" stroke="#808080" stroke-width="1"/><path d="M2.600 9.400 A4.800 4.800 0 0 1 9.400 2.600" fill="none" stroke="#404040" stroke-width="1"/><path d="M10.300 1.700 A6 6 0 0 1 1.700 10.300" fill="none" stroke="#fff" stroke-width="1"/><path d="M9.400 2.600 A4.800 4.800 0 0 1 2.600 9.400" fill="none" stroke="#d4d0c8" stroke-width="1"/><circle cx="6" cy="6" r="2" fill="#000"/></svg>
<div id="t137" class="t" style="left:824px;top:360px;letter-spacing:-0.044px;">Прямое соединение (Актив)</div>
<svg class="ic" style="left:809px;top:380px" width="12" height="12"><circle cx="6" cy="6" r="5.500" fill="#fff"/><path d="M1.700 10.300 A6 6 0 0 1 10.300 1.700" fill="none" stroke="#808080" stroke-width="1"/><path d="M2.600 9.400 A4.800 4.800 0 0 1 9.400 2.600" fill="none" stroke="#404040" stroke-width="1"/><path d="M10.300 1.700 A6 6 0 0 1 1.700 10.300" fill="none" stroke="#fff" stroke-width="1"/><path d="M9.400 2.600 A4.800 4.800 0 0 1 2.600 9.400" fill="none" stroke="#d4d0c8" stroke-width="1"/></svg>
<div id="t138" class="t" style="left:824px;top:379px;letter-spacing:-0.857px;">SOCKS5</div>
<div class="b sunk" style="left:891px;top:379px;width:13px;height:13px;background:#d4d0c8"></div>
<svg class="ic" style="left:894px;top:382px" width="7" height="7"><path d="M0 2 v3 l2 2 l5 -5 v-3 l-5 5z" fill="#808080"/></svg>
<div id="t139" class="t dis" style="left:908px;top:380px;letter-spacing:-0.062px;">Использовать SOCKS5 сервер для обработки хостов</div>
<div id="t140" class="t" style="left:843.5px;top:408px;letter-spacing:-0.426px;">Socks IP</div>
<div class="b sunk" style="left:891px;top:404px;width:99px;height:20px;background:#d4d0c8"></div>
<div id="t141" class="t" style="left:897px;top:407px;letter-spacing:-0.100px;color:#808080">10.3.7.227</div>
<div id="t142" class="t" style="left:1047.55px;top:408px;">Порт</div>
<div class="b sunk" style="left:1080px;top:404px;width:44px;height:20px;background:#d4d0c8"></div>
<div id="t143" class="t" style="left:1092px;top:407px;letter-spacing:0.289px;color:#808080">4111</div>
<div id="t144" class="t" style="left:829px;top:434px;letter-spacing:-0.168px;">Имя юзера</div>
<div class="b sunk" style="left:891px;top:430px;width:99px;height:20px;background:#d4d0c8"></div>
<div id="t145" class="t" style="left:1034.33px;top:434px;">Пароль</div>
<div class="b sunk" style="left:1080px;top:430px;width:101px;height:20px;background:#d4d0c8"></div>
<div class="b " style="left:1052px;top:544px;width:75px;height:23px;background:#d4d0c8;border:1px solid #000;box-shadow:inset 1px 1px 0 #fff,inset -1px -1px 0 #404040,inset 2px 2px 0 #d4d0c8,inset -2px -2px 0 #808080"></div>
<div id="t146" class="t" style="left:1081px;top:549px;letter-spacing:0.047px;">OK</div>
<div class="b btn" style="left:1133px;top:544px;width:75px;height:23px;"></div>
<div id="t147" class="t" style="left:1152px;top:549px;letter-spacing:-0.078px;">Отмена</div>
</div></body></html>
